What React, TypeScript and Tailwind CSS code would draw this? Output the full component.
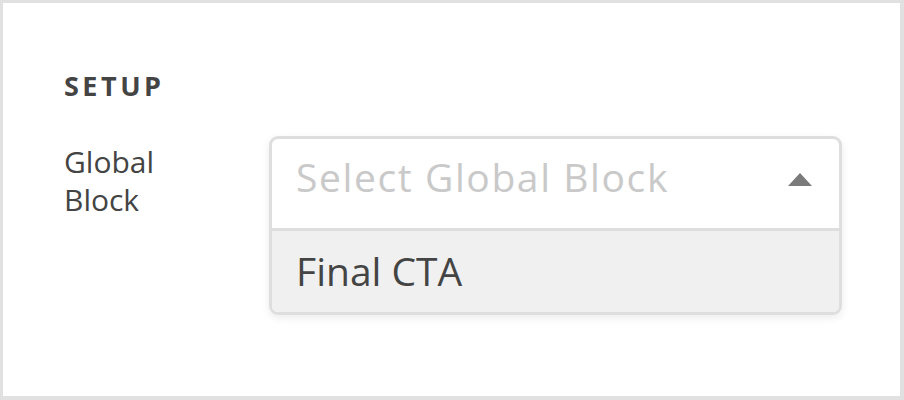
import React from "react";

const font = { fontFamily: '"Open Sans", "Noto Sans", sans-serif' };

export default function App() {
  return (
    <div
      style={font}
      className="box-border h-[400px] w-[904px] border-t-[3px] border-l-[3px] border-r-4 border-b-4 border-[#e1e1e1] bg-white pl-[61px] pt-[69px]"
    >
      <div className="text-[27px] font-bold leading-[27px] tracking-[3.5px] text-[#444]">SETUP</div>
      <div className="mt-[37px] flex items-start">
        <div className="mt-[7px] w-[205px] text-[30px] leading-[38px] text-[#444]">
          Global
          <br />
          Block
        </div>
        <div className="w-[573px] overflow-hidden rounded-[9px] border-[3px] border-[#dedede] bg-white shadow-[0_3px_8px_rgba(0,0,0,0.08)]">
          <div className="flex h-[92px] items-start justify-between border-b-[3px] border-[#dedede] pl-[24px] pr-[27px] pt-[12px]">
            <span className="text-[39px] leading-[52px] tracking-[1.6px] text-[#c9c9c9]">Select Global Block</span>
            <svg width="24" height="13" viewBox="0 0 24 13" className="mt-[22px]">
              <polygon points="12,0 24,13 0,13" fill="#7a7a7a" />
            </svg>
          </div>
          <div className="h-[81px] bg-[#f0f0f0] pl-[24px] pt-[14px]">
            <span className="text-[39px] leading-[52px] text-[#444]">Final CTA</span>
          </div>
        </div>
      </div>
    </div>
  );
}
